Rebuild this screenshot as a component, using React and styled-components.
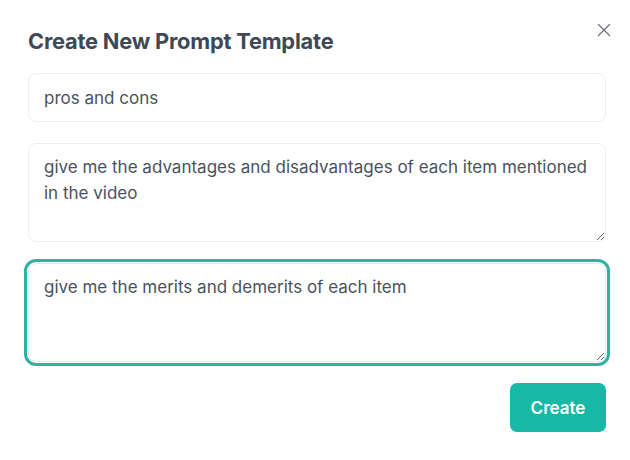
import { useEffect, useRef } from 'react';
import styled, { createGlobalStyle } from 'styled-components';

const GlobalStyle = createGlobalStyle`
  html, body {
    margin: 0;
    padding: 0;
    background: #ffffff;
  }
  body {
    font-family: Inter, "Noto Sans", "Liberation Sans", sans-serif;
  }
`

const Modal = styled.div`
  position: relative;
  width: 630px;
  height: 460px;
  box-sizing: border-box;
  padding: 26px 24px 0 28px;
  background: #ffffff;
`

const Title = styled.h2`
  margin: 0;
  height: 30px;
  font-size: 21.8px;
  line-height: 30px;
  font-weight: 700;
  color: #3e4856;
  letter-spacing: -0.2px;
`

const CloseButton = styled.button`
  position: absolute;
  top: 20px;
  right: 16px;
  width: 20px;
  height: 20px;
  padding: 0;
  border: none;
  background: none;
  color: #6b7280;
  display: flex;
  align-items: center;
  justify-content: center;
  cursor: pointer;
`

const Form = styled.form`
  margin-top: 17px;
  display: flex;
  flex-direction: column;
  gap: 21px;
`

const fieldBase = `
  box-sizing: border-box;
  width: 578px;
  border: 1px solid #eceef2;
  border-radius: 8px;
  background: #ffffff;
  color: #4a5260;
  font-family: Inter, "Noto Sans", "Liberation Sans", sans-serif;
  font-size: 17px;
  outline: none;
`

const Input = styled.input`
  ${fieldBase}
  height: 49px;
  padding: 0 15px;
`

const TextArea = styled.textarea`
  ${fieldBase}
  height: 99px;
  padding: 10px 15px;
  line-height: 26px;
  resize: vertical;
  caret-color: #1f2937;
  ${props => props.$active && `
    border-color: #d6eeea;
    outline: 3px solid #2fb2a1;
    outline-offset: 1px;
  `}
`

const Footer = styled.div`
  display: flex;
  justify-content: flex-end;
`

const CreateButton = styled.button`
  width: 96px;
  height: 49px;
  border: none;
  border-radius: 7px;
  background: #17b8a6;
  color: #ffffff;
  font-family: Inter, "Noto Sans", "Liberation Sans", sans-serif;
  font-size: 17px;
  font-weight: 600;
  cursor: pointer;
`

function App() {
  const activeRef = useRef(null)

  useEffect(() => {
    const el = activeRef.current
    if (el) {
      el.focus()
      el.setSelectionRange(el.value.length, el.value.length)
    }
  }, [])

  return (
    <>
      <GlobalStyle />
      <Modal>
        <Title>Create New Prompt Template</Title>
        <CloseButton aria-label="Close">
          <svg width="14" height="14" viewBox="0 0 14 14" fill="none" stroke="currentColor" strokeWidth="1.3" strokeLinecap="round">
            <path d="M1.5 1.5 L12.5 12.5" />
            <path d="M12.5 1.5 L1.5 12.5" />
          </svg>
        </CloseButton>
        <Form onSubmit={(e) => e.preventDefault()}>
          <Input type='text' defaultValue="pros and cons" />
          <TextArea defaultValue="give me the advantages and disadvantages of each item mentioned in the video" />
          <TextArea ref={activeRef} $active defaultValue="give me the merits and demerits of each item" />
          <Footer>
            <CreateButton type='submit'>Create</CreateButton>
          </Footer>
        </Form>
      </Modal>
    </>
  )
}

export default App
